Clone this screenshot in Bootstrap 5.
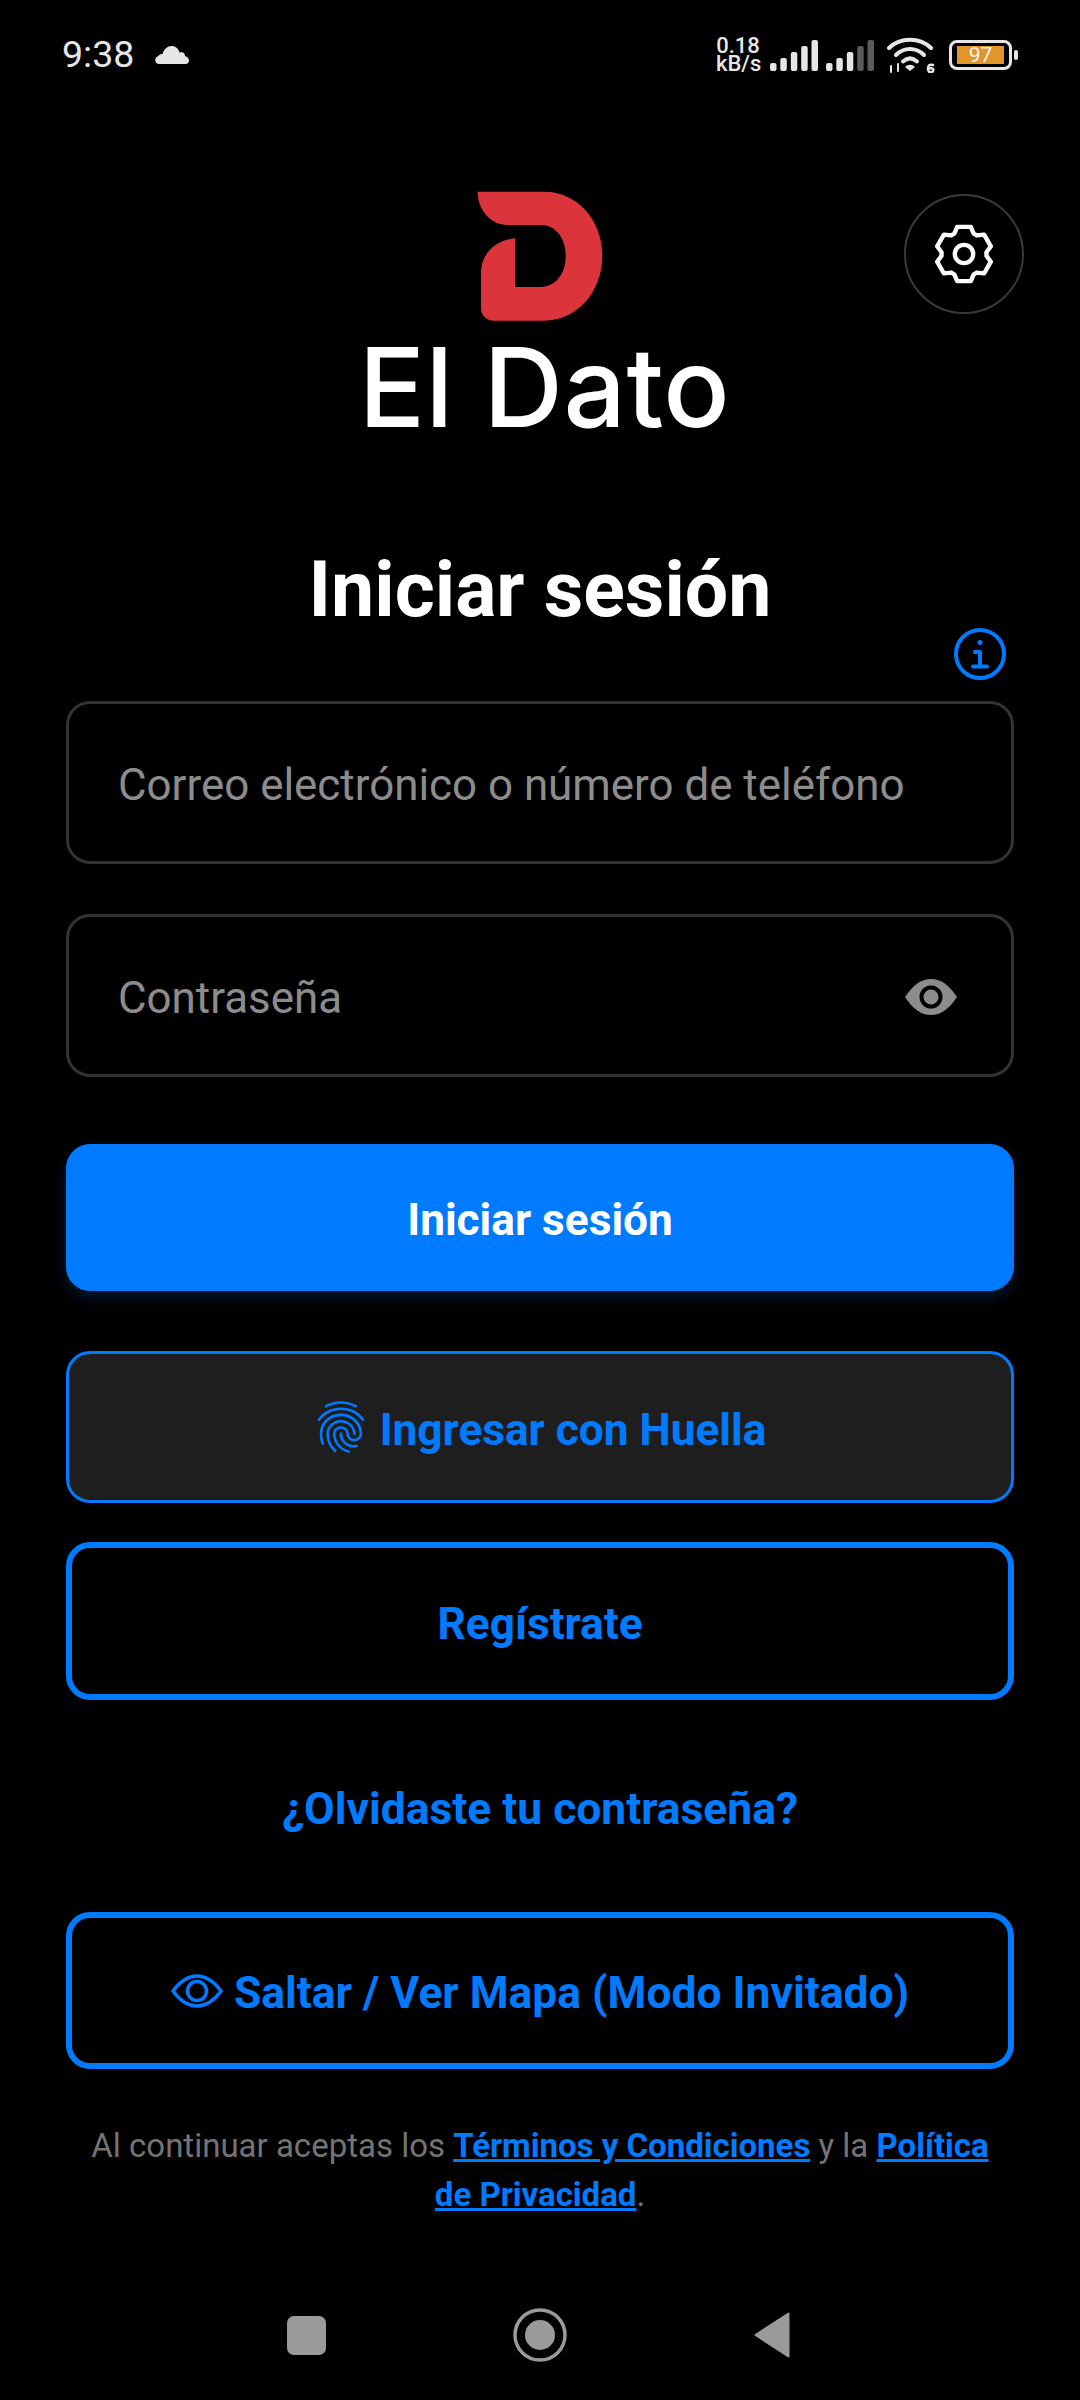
<!DOCTYPE html>
<html lang="es">
<head>
    <meta charset="UTF-8">
    <meta name="viewport" content="width=device-width, initial-scale=1.0">
    <title>El Dato</title>
    <link href="https://cdn.jsdelivr.net/npm/bootstrap@5.3.0/dist/css/bootstrap.min.css" rel="stylesheet">
    <style>
        body {
            background-color: #000;
            font-family: Roboto, sans-serif;
        }
        .screen {
            width: 1080px;
            height: 2400px;
            overflow: hidden;
        }
        .status-bar {
            height: 110px;
            padding: 0 62px 0 62px;
            color: #e6e6e6;
        }
        .status-time {
            font-size: 37.5px;
            line-height: 1;
            margin-right: 21px;
        }
        .status-speed {
            font-size: 22px;
            font-weight: 500;
            line-height: 18px;
            margin-right: 10px;
            width: 44px;
        }
        .battery-box {
            width: 63px;
            height: 30px;
            border: 3px solid #e6e6e6;
            border-radius: 8px;
            padding: 3px 5px;
            margin-left: 14px;
        }
        .battery-fill {
            height: 18px;
            background-color: #e0962a;
            color: #f5f5f5;
            font-size: 21px;
            line-height: 18px;
            text-align: center;
        }
        .battery-nub {
            width: 4px;
            height: 10px;
            background-color: #e6e6e6;
            border-radius: 2px;
            margin-left: 2px;
        }
        .brand-area {
            height: 340px;
            padding-top: 80px;
        }
        .brand-name {
            font-family: Inter, sans-serif;
            font-size: 110px;
            font-weight: 550;
            line-height: 1;
            color: #fff;
            letter-spacing: 0.5px;
            margin: 9px 0 0 9px;
        }
        .settings-btn {
            position: absolute;
            left: 904px;
            top: 194px;
            width: 120px;
            height: 120px;
            border: 2px solid #3a3a3a;
            border-radius: 50%;
            background: transparent;
        }
        .login-form {
            padding: 0 66px;
        }
        .login-title {
            font-size: 77px;
            font-weight: 700;
            line-height: 85px;
            color: #fff;
            margin: 98px 0 0;
        }
        .info-row {
            height: 42px;
            margin-bottom: 26px;
            padding-right: 8px;
        }
        .login-input {
            height: 163px;
            background-color: #000 !important;
            border: 3px solid #333;
            border-radius: 24px;
            color: #fff;
            font-size: 43.9px;
            padding: 5px 49px 0;
        }
        .login-input::placeholder {
            color: #8c8c8c;
        }
        .password-field {
            margin-top: 50px;
        }
        .eye-toggle {
            position: absolute;
            right: 57px;
            top: 65px;
        }
        .btn-main, .btn-print, .btn-line {
            border-radius: 24px;
            font-size: 44.2px;
            font-weight: 700;
        }
        .btn-label {
            padding-top: 6px;
        }
        .btn-main {
            height: 147px;
            margin-top: 67px;
            background-color: #007aff;
            border-color: #007aff;
            color: #fff;
            box-shadow: 0 6px 14px rgba(0, 122, 255, 0.2);
        }
        .btn-print {
            height: 152px;
            margin-top: 60px;
            padding-right: 16px;
            background-color: #1e1e1e;
            border: 3px solid #007aff;
            color: #007aff;
        }
        .btn-line {
            height: 158px;
            margin-top: 39px;
            background: transparent;
            border: 6px solid #007aff;
            color: #007aff;
        }
        .forgot-row {
            margin-top: 83px;
        }
        .forgot-link {
            font-size: 44.4px;
            font-weight: 700;
            line-height: 52px;
            color: #007aff;
            text-decoration: none;
        }
        .btn-line.btn-guest {
            height: 157px;
            margin-top: 77px;
            font-size: 44.4px;
        }
        .legal-text {
            font-size: 33px;
            line-height: 49px;
            color: #737373;
            margin: 52px 0 0;
            padding: 0 20px;
        }
        .legal-text a {
            color: #007aff;
            font-weight: 700;
        }
        .nav-keys {
            position: absolute;
            left: 287px;
            top: 2312px;
            width: 503px;
            height: 46px;
        }
    </style>
</head>
<body>
    <div class="screen position-relative">
        <!-- status bar -->
        <div class="status-bar d-flex align-items-center">
            <span class="status-time">9:38</span>
            <svg width="34" height="18" viewBox="0 0 34 18"><path fill="#e6e6e6" d="M4 18a4 4 0 0 1-1-7.8C4 8.500 6 8 7.500 8 9 3 12.500 0 16.500 0c4 0 7 2.500 8 6.500 1-.5 2.500-.5 3.500 0 1.500.8 2 2 2 3.500 2.500 1 4 2.500 4 4.500 0 2-1.500 3.500-3.500 3.500z"/></svg>
            <div class="status-speed ms-auto text-center">0.18<br>kB/s</div>
            <svg width="48" height="32" viewBox="0 0 48 32" fill="#e6e6e6"><rect x="0" y="24" width="6.500" height="8" rx="2"/><rect x="10.300" y="19" width="6.500" height="13" rx="2"/><rect x="20.800" y="13" width="6.500" height="19" rx="2"/><rect x="31.200" y="7" width="6.500" height="25" rx="2"/><rect x="41.500" y="1" width="6.500" height="31" rx="2"/></svg>
            <svg class="ms-2" width="48" height="32" viewBox="0 0 48 32" fill="#e6e6e6"><rect x="0" y="24" width="6.500" height="8" rx="2"/><rect x="10.300" y="19" width="6.500" height="13" rx="2"/><rect x="20.800" y="13" width="6.500" height="19" rx="2"/><rect x="31.200" y="7" width="6.500" height="25" rx="2" fill="#5a5a5a"/><rect x="41.500" y="1" width="6.500" height="31" rx="2" fill="#5a5a5a"/></svg>
            <svg style="margin-left:13px" width="48" height="36" viewBox="0 0 48 36" fill="none" stroke="#e6e6e6" stroke-width="4" stroke-linecap="round"><path d="M2 11C13 0 33 0 44 11"/><path d="M9 18c8-8 20-8 28 0"/><path d="M16 24.500c4.500-4 9.500-4 14 0"/><path fill="#e6e6e6" stroke="none" d="M18 30c3-3 7-3 10 0l-5 4z"/><path stroke-width="2" d="M4 29v6M11 27v7"/><path stroke-width="2.500" d="M46 28c-3-1-5 0-5 4s4 4 5 2-1-4-5-2"/></svg>
            <div class="battery-box"><div class="battery-fill">97</div></div>
            <div class="battery-nub"></div>
        </div>

        <!-- logo -->
        <div class="brand-area d-flex flex-column align-items-center">
            <svg width="132" height="133" viewBox="430 60 395 400"><path fill="#dc343b" d="M440 65H640C740 65 815 150 815 258C815 365 740 453 640 453H490C466 453 450 437 450 415V310C450 250 495 210 553 205V352H630C675 352 705 310 705 258C705 205 675 165 630 165H530C480 165 440 120 440 65Z"/></svg>
            <div class="brand-name">El Dato</div>
        </div>
        <button class="settings-btn d-flex align-items-center justify-content-center p-0" type="button" aria-label="Ajustes">
            <svg width="60" height="60" viewBox="-31 -31 62 62" fill="none" stroke="#fff" stroke-width="4.500" stroke-linejoin="round"><polygon points="-10,-21 -7,-28 7,-28 10,-21 13.190,-19.160 20.750,-20.060 27.750,-7.940 23.190,-1.840 23.190,1.840 27.750,7.940 20.750,20.060 13.190,19.160 10,21 7,28 -7,28 -10,21 -13.190,19.160 -20.750,20.060 -27.750,7.940 -23.190,1.840 -23.190,-1.840 -27.750,-7.940 -20.750,-20.060 -13.190,-19.160"/><circle r="9.500"/></svg>
        </button>

        <!-- form -->
        <form class="login-form" onsubmit="return false">
            <h1 class="login-title text-center">Iniciar sesión</h1>
            <div class="info-row d-flex justify-content-end align-items-center">
                <svg width="52" height="52" viewBox="0 0 52 52" fill="none" stroke="#007aff" stroke-width="4" stroke-linecap="round"><circle cx="26" cy="26" r="24"/><path d="M26 24v14M21 24h5M19 38.500h14"/><circle cx="26" cy="14.500" r="2.500" fill="#007aff" stroke="none"/></svg>
            </div>
            <input class="form-control login-input" type="text" placeholder="Correo electrónico o número de teléfono">
            <div class="position-relative password-field">
                <input class="form-control login-input" type="password" placeholder="Contraseña">
                <svg class="eye-toggle" width="52" height="36" viewBox="0 0 52 36"><path fill="#8c8c8c" d="M0 18C8 6 16 0 26 0s18 6 26 18C44 30 36 36 26 36S8 30 0 18Z"/><circle cx="26" cy="18" r="9.500" fill="#8c8c8c" stroke="#000" stroke-width="4"/></svg>
            </div>
            <button class="btn btn-main w-100 d-flex align-items-center justify-content-center" type="submit"><span class="btn-label">Iniciar sesión</span></button>
            <button class="btn btn-print w-100 d-flex align-items-center justify-content-center gap-2" type="button">
                <svg width="62" height="62" viewBox="0 0 24 24" fill="#007aff"><path d="M17.810 4.470c-.08 0-.16-.02-.23-.06C15.660 3.420 14 3 12.010 3c-1.980 0-3.860.47-5.570 1.410-.24.13-.54.04-.68-.2-.13-.24-.04-.55.2-.68C7.820 2.520 9.860 2 12.010 2c2.130 0 3.990.47 6.030 1.520.25.13.34.43.21.67-.09.18-.26.28-.44.28zM3.500 9.720c-.1 0-.2-.03-.29-.09-.23-.16-.28-.47-.12-.7.99-1.400 2.250-2.500 3.750-3.270C9.980 4.040 14 4.030 17.150 5.650c1.500.77 2.760 1.860 3.750 3.250.16.22.11.54-.12.7-.23.16-.54.11-.7-.12-.9-1.260-2.040-2.250-3.390-2.940-2.870-1.470-6.540-1.470-9.400.01-1.360.7-2.500 1.700-3.400 2.960-.08.14-.23.21-.39.21zm6.250 12.070c-.13 0-.26-.05-.35-.15-.87-.87-1.340-1.430-2.010-2.640-.69-1.230-1.050-2.730-1.050-4.340 0-2.970 2.540-5.390 5.660-5.390s5.660 2.420 5.660 5.390c0 .28-.22.5-.5.5s-.5-.22-.5-.5c0-2.420-2.090-4.390-4.660-4.390-2.570 0-4.660 1.970-4.660 4.390 0 1.440.32 2.770.93 3.850.64 1.150 1.080 1.640 1.850 2.420.19.2.19.51 0 .71-.11.1-.24.15-.37.15zm7.170-1.850c-1.190 0-2.240-.3-3.100-.89-1.490-1.010-2.380-2.650-2.380-4.390 0-.28.22-.5.5-.5s.5.22.5.5c0 1.410.72 2.740 1.940 3.560.71.48 1.540.71 2.540.71.24 0 .64-.03 1.040-.1.27-.05.53.13.58.41.05.27-.13.53-.41.58-.57.11-1.070.12-1.210.12zM14.910 22c-.04 0-.09-.01-.13-.02-1.590-.44-2.630-1.030-3.720-2.100-1.400-1.390-2.170-3.240-2.170-5.220 0-1.620 1.380-2.940 3.080-2.940 1.700 0 3.080 1.320 3.080 2.940 0 1.070.93 1.940 2.080 1.940s2.080-.87 2.080-1.940c0-3.770-3.250-6.830-7.250-6.830-2.840 0-5.440 1.580-6.610 4.030-.39.81-.59 1.760-.59 2.800 0 .78.07 2.010.67 3.610.1.26-.03.55-.29.64-.26.1-.55-.04-.64-.29-.49-1.310-.73-2.610-.73-3.960 0-1.200.23-2.290.68-3.240 1.330-2.790 4.280-4.600 7.510-4.600 4.550 0 8.250 3.510 8.250 7.830 0 1.620-1.380 2.940-3.080 2.940s-3.080-1.320-3.080-2.940c0-1.070-.93-1.940-2.080-1.940s-2.080.87-2.080 1.940c0 1.710.66 3.310 1.870 4.510.95.94 1.860 1.460 3.270 1.850.27.07.42.35.35.61-.05.23-.26.38-.47.38z"/></svg>
                <span class="btn-label">Ingresar con Huella</span>
            </button>
            <button class="btn btn-line w-100 d-flex align-items-center justify-content-center" type="button"><span class="btn-label">Regístrate</span></button>
            <div class="text-center forgot-row"><a class="forgot-link" href="#">¿Olvidaste tu contraseña?</a></div>
            <button class="btn btn-line btn-guest w-100 d-flex align-items-center justify-content-center gap-2" type="button">
                <svg style="margin-right:3px" width="52" height="34" viewBox="0 0 52 34" fill="none" stroke="#007aff" stroke-width="3.500"><path d="M2 17C10 6 17 2 26 2s16 4 24 15c-8 11-15 15-24 15S10 28 2 17Z"/><circle cx="26" cy="17" r="9.500"/></svg>
                <span class="btn-label">Saltar / Ver Mapa (Modo Invitado)</span>
            </button>
            <p class="legal-text text-center">Al continuar aceptas los <a href="#">Términos y Condiciones</a> y la <a href="#">Política de Privacidad</a>.</p>
        </form>

        <!-- android nav keys -->
        <div class="nav-keys d-flex align-items-center justify-content-between">
            <svg width="39" height="39" viewBox="0 0 39 39"><rect width="39" height="39" rx="7" fill="#9a9a9a"/></svg>
            <svg width="54" height="54" viewBox="0 0 54 54"><circle cx="27" cy="27" r="25" fill="none" stroke="#9a9a9a" stroke-width="3.500"/><circle cx="27" cy="27" r="15" fill="#9a9a9a"/></svg>
            <svg width="36" height="46" viewBox="0 0 36 46"><path fill="#9a9a9a" stroke="#9a9a9a" stroke-width="2" stroke-linejoin="round" d="M1.500 23 34.500 1.500V44.500Z"/></svg>
        </div>
    </div>
    <script src="https://cdn.jsdelivr.net/npm/bootstrap@5.3.0/dist/js/bootstrap.bundle.min.js"></script>
</body>
</html>
